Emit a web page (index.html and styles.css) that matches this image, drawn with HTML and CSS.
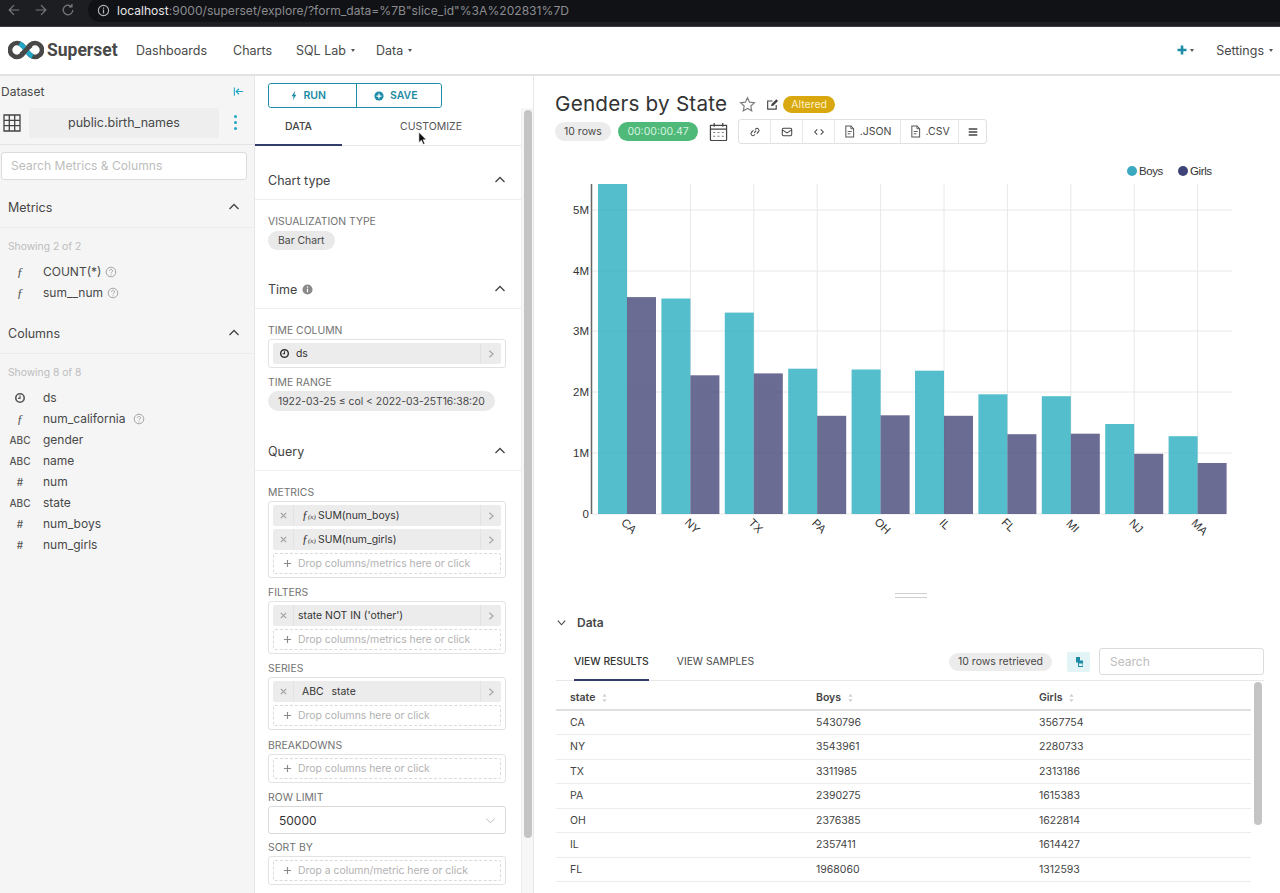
FILE: index.html
```html
<!DOCTYPE html>
<html lang="en">
<head>
<meta charset="utf-8">
<title>Genders by State</title>
<link rel="stylesheet" href="styles.css">
</head>
<body>
<svg class="sprite" aria-hidden="true">
  <symbol id="up" viewBox="0 0 12 12"><path d="M1.5 8 6 3.5 10.500 8" fill="none" stroke="currentColor" stroke-width="1.300"/></symbol>
  <symbol id="right" viewBox="0 0 12 12"><path d="M4 2l4.500 4L4 10" fill="none" stroke="currentColor" stroke-width="1.500"/></symbol>
  <symbol id="help" viewBox="0 0 12 12"><circle cx="6" cy="6" r="4.800" fill="none" stroke="currentColor"/><path d="M4.500 4.800a1.500 1.500 0 1 1 2.300 1.300c-.6.4-.8.6-.8 1.200" fill="none" stroke="currentColor"/><circle cx="6" cy="8.800" r=".6" fill="currentColor"/></symbol>
  <symbol id="clock" viewBox="0 0 12 12"><circle cx="6" cy="6" r="4.200" fill="none" stroke="currentColor" stroke-width="1.600"/><path d="M6 3.500V6.300H4" fill="none" stroke="currentColor" stroke-width="1.200"/></symbol>
  <symbol id="cross" viewBox="0 0 10 10"><path d="M2 2l6 6M8 2l-6 6" fill="none" stroke="currentColor" stroke-width="1.300"/></symbol>
  <symbol id="plus" viewBox="0 0 10 10"><path d="M5 1v8M1 5h8" fill="none" stroke="currentColor" stroke-width="1.300"/></symbol>
  <symbol id="file" viewBox="0 0 12 14"><path d="M2 1h5.500L10.500 4v9H2z" fill="none" stroke="currentColor" stroke-width="1.100"/><path d="M7.500 1v3h3M4 7h4.500M4 9.500h3" fill="none" stroke="currentColor"/></symbol>
  <symbol id="sort" viewBox="0 0 8 12"><path d="M4 1 6.500 4.500h-5zM4 11 1.500 7.500h5z" fill="currentColor"/></symbol>
</svg>

<header class="browser">
  <svg class="b-icon" viewBox="0 0 16 16"><path d="M14 8H2.500M8 2.500 2.500 8 8 13.500" fill="none" stroke="currentColor" stroke-width="1.400"/></svg>
  <svg class="b-icon" viewBox="0 0 16 16"><path d="M2 8h11.500M8 2.500 13.500 8 8 13.500" fill="none" stroke="currentColor" stroke-width="1.400"/></svg>
  <svg class="b-icon" viewBox="0 0 16 16"><path d="M13.500 8a5.500 5.500 0 1 1-1.700-4M12.500 1v3.500H9" fill="none" stroke="currentColor" stroke-width="1.400"/></svg>
  <div class="urlbar">
    <svg class="b-info" viewBox="0 0 14 14"><circle cx="7" cy="7" r="5.500" fill="none" stroke="currentColor" stroke-width="1.200"/><path d="M7 6v4.200M7 3.800v1.300" stroke="currentColor" stroke-width="1.300"/></svg>
    <span class="url"><span class="url-host">localhost</span>:9000/superset/explore/?form_data=%7B"slice_id"%3A%202831%7D</span>
  </div>
</header>

<nav class="nav">
  <svg class="logo" viewBox="0 0 36 20">
    <path d="M18 10C15 6 13 3 9 3A7 7 0 0 0 9 17C13 17 15 14 18 10C21 6 23 3 27 3A7 7 0 0 1 27 17C23 17 21 14 18 10" fill="none" stroke="#484848" stroke-width="4.600"/>
    <path d="M11.500 3.500C14.500 5 16 7.400 18 10C20 12.600 21.500 15 24.500 16.500" fill="none" stroke="#20a7c9" stroke-width="4.600"/>
    <path d="M13 14.500C15 13 16.500 12 18 10C19.500 8 21 7 23 5.500" fill="none" stroke="#484848" stroke-width="4.600"/>
  </svg>
  <span class="brand">Superset</span>
  <a class="nav-link nav-dash">Dashboards</a>
  <a class="nav-link nav-charts">Charts</a>
  <a class="nav-link nav-sql">SQL Lab<i class="caret"></i></a>
  <a class="nav-link">Data<i class="caret"></i></a>
  <span class="nav-fill"></span>
  <svg class="nav-plus" viewBox="0 0 10 10"><path d="M5 .5v9M.5 5h9" stroke="#1d8ba5" stroke-width="2.600"/></svg>
  <i class="caret caret-plus"></i>
  <a class="nav-link nav-settings">Settings<i class="caret"></i></a>
</nav>

<main class="main">
  <aside class="left">
    <div class="ds-head">
      <span>Dataset</span>
      <svg class="collapse" viewBox="0 0 12 12"><path d="M1.500 1.500v9M11 6H4M6.500 3 3.500 6l3 3" fill="none" stroke="#20a7c9" stroke-width="1.200"/></svg>
    </div>
    <div class="ds-row">
      <svg class="ds-grid" viewBox="0 0 18 18"><path d="M1 1h16v16H1zM1 6.300h16M1 11.700h16M6.300 1v16M11.700 1v16" fill="none" stroke="#444" stroke-width="1.300"/></svg>
      <div class="ds-name">public.birth_names</div>
      <div class="kebab"><i></i><i></i><i></i></div>
    </div>
    <div class="search">Search Metrics &amp; Columns</div>

    <div class="l-head l-head-first"><span>Metrics</span><svg class="chev"><use href="#up"/></svg></div>
    <div class="showing">Showing 2 of 2</div>
    <ul class="fields">
      <li><span class="ft ft-f">ƒ</span><span>COUNT(*)</span><svg class="help"><use href="#help"/></svg></li>
      <li><span class="ft ft-f">ƒ</span><span>sum__num</span><svg class="help"><use href="#help"/></svg></li>
    </ul>

    <div class="l-head l-head-next"><span>Columns</span><svg class="chev"><use href="#up"/></svg></div>
    <div class="showing">Showing 8 of 8</div>
    <ul class="fields">
      <li><span class="ft"><svg class="clock"><use href="#clock"/></svg></span><span>ds</span></li>
      <li><span class="ft ft-f">ƒ</span><span>num_california</span><svg class="help help-wide"><use href="#help"/></svg></li>
      <li><span class="ft">ABC</span><span>gender</span></li>
      <li><span class="ft">ABC</span><span>name</span></li>
      <li><span class="ft">#</span><span>num</span></li>
      <li><span class="ft">ABC</span><span>state</span></li>
      <li><span class="ft">#</span><span>num_boys</span></li>
      <li><span class="ft">#</span><span>num_girls</span></li>
    </ul>
  </aside>

  <section class="middle">
    <div class="actions">
      <button class="act act-run"><svg class="act-i" viewBox="0 0 10 14"><path d="M6.500 1 2 8h2.500L3.500 13 8 6H5.500z" fill="#1d8ba5"/></svg>RUN</button>
      <button class="act act-save"><svg class="act-i act-plus" viewBox="0 0 12 12"><circle cx="6" cy="6" r="5.500" fill="#1d8ba5"/><path d="M6 3v6M3 6h6" stroke="#fff" stroke-width="1.500"/></svg>SAVE</button>
    </div>
    <div class="m-body">
      <div class="m-content">
        <div class="tabs">
          <span class="tab tab-on">DATA</span>
          <span class="tab">CUSTOMIZE</span>
        </div>

        <div class="c-head c-first"><span>Chart type</span><svg class="chev"><use href="#up"/></svg></div>
        <div class="c-body">
          <div class="field field-vis"><label>VISUALIZATION TYPE</label><span class="pill">Bar Chart</span></div>
        </div>

        <div class="c-head c-next"><span>Time <svg class="info" viewBox="0 0 12 12"><circle cx="6" cy="6" r="5.500" fill="#8a8a8a"/><path d="M6 5.200v3.800M6 2.800v1.300" stroke="#fff" stroke-width="1.300"/></svg></span><svg class="chev"><use href="#up"/></svg></div>
        <div class="c-body">
          <div class="field field-first"><label>TIME COLUMN</label>
            <div class="box">
              <div class="opt"><span class="opt-main opt-plain"><svg class="clock clock-dark"><use href="#clock"/></svg><span>ds</span></span><span class="opt-go"><svg><use href="#right"/></svg></span></div>
            </div>
          </div>
          <div class="field"><label>TIME RANGE</label><span class="pill pill-range">1922-03-25 ≤ col &lt; 2022-03-25T16:38:20</span></div>
        </div>

        <div class="c-head c-query"><span>Query</span><svg class="chev"><use href="#up"/></svg></div>
        <div class="c-body">
          <div class="field field-first"><label>METRICS</label>
            <div class="box">
              <div class="opt"><span class="opt-x"><svg><use href="#cross"/></svg></span><span class="opt-main"><em class="fx">ƒ<small>(x)</small></em>SUM(num_boys)</span><span class="opt-go"><svg><use href="#right"/></svg></span></div>
              <div class="opt"><span class="opt-x"><svg><use href="#cross"/></svg></span><span class="opt-main"><em class="fx">ƒ<small>(x)</small></em>SUM(num_girls)</span><span class="opt-go"><svg><use href="#right"/></svg></span></div>
              <div class="drop"><svg><use href="#plus"/></svg>Drop columns/metrics here or click</div>
            </div>
          </div>
          <div class="field"><label>FILTERS</label>
            <div class="box">
              <div class="opt"><span class="opt-x"><svg><use href="#cross"/></svg></span><span class="opt-main opt-tight">state NOT IN ('other')</span><span class="opt-go"><svg><use href="#right"/></svg></span></div>
              <div class="drop"><svg><use href="#plus"/></svg>Drop columns/metrics here or click</div>
            </div>
          </div>
          <div class="field"><label>SERIES</label>
            <div class="box">
              <div class="opt"><span class="opt-x"><svg><use href="#cross"/></svg></span><span class="opt-main"><span class="opt-abc">ABC</span>state</span><span class="opt-go"><svg><use href="#right"/></svg></span></div>
              <div class="drop"><svg><use href="#plus"/></svg>Drop columns here or click</div>
            </div>
          </div>
          <div class="field field-wide"><label>BREAKDOWNS</label>
            <div class="box"><div class="drop"><svg><use href="#plus"/></svg>Drop columns here or click</div></div>
          </div>
          <div class="field"><label>ROW LIMIT</label>
            <div class="select"><span>50000</span><svg viewBox="0 0 12 12"><path d="M1.500 4 6 8.500 10.500 4" fill="none" stroke="#b5b5b5"/></svg></div>
          </div>
          <div class="field field-close"><label>SORT BY</label>
            <div class="box"><div class="drop"><svg><use href="#plus"/></svg>Drop a column/metric here or click</div></div>
          </div>
        </div>
      </div>
      <div class="m-track"><div class="m-thumb"></div></div>
    </div>
  </section>

  <section class="right">
    <div class="title-row">
      <h1>Genders by State</h1>
      <svg class="star" viewBox="0 0 18 18"><path d="M9 1.800l2.200 4.700 5.100.6-3.800 3.500 1 5.100L9 13.200l-4.500 2.500 1-5.100L1.700 7.100l5.100-.6z" fill="none" stroke="#7f7f7f" stroke-width="1.300"/></svg>
      <svg class="edit" viewBox="0 0 14 14"><path d="M11 7.500V12H1.800V3.200H7" fill="none" stroke="#444" stroke-width="1.200"/><path d="M5.500 8.800l.5-2.300L11.200 1.300l1.800 1.800-5.200 5.200z" fill="#444"/></svg>
      <span class="altered">Altered</span>
    </div>
    <div class="meta-row">
      <span class="badge">10 rows</span>
      <span class="badge badge-time">00:00:00.47</span>
      <svg class="cal" viewBox="0 0 20 20"><path d="M1.500 3.500h17v15a1 1 0 0 1-1 1h-15a1 1 0 0 1-1-1zM1.500 7.500h17M5.500 1v4M14.500 1v4" fill="none" stroke="#444" stroke-width="1.300"/><path d="M4.500 11h2M9 11h2M13.500 11h2M4.500 15h2M9 15h2M13.500 15h2" stroke="#777" stroke-width="1.200"/></svg>
      <div class="btn-group">
        <span class="gb gb-s"><svg viewBox="0 0 14 14"><path d="M6 8l2.500-2.500M5.200 5 3 7.200a2.300 2.300 0 0 0 3.300 3.300L7 9.800M9 9l2-2.200A2.300 2.300 0 0 0 7.700 3.500L7 4.200" fill="none" stroke="#444" stroke-width="1.200"/></svg></span>
        <span class="gb gb-s"><svg viewBox="0 0 14 14"><rect x="1.500" y="2.500" width="11" height="9" rx="1.500" fill="none" stroke="#444" stroke-width="1.200"/><path d="M1.500 4.500 7 8l5.500-3.500" fill="none" stroke="#444" stroke-width="1.200"/></svg></span>
        <span class="gb gb-s"><svg viewBox="0 0 14 14"><path d="M5 4 2 7l3 3M9 4l3 3-3 3" fill="none" stroke="#444" stroke-width="1.200"/></svg></span>
        <span class="gb gb-json"><svg class="gb-file"><use href="#file"/></svg>.JSON</span>
        <span class="gb gb-csv"><svg class="gb-file"><use href="#file"/></svg>.CSV</span>
        <span class="gb gb-menu"><svg viewBox="0 0 14 14"><path d="M2 3.500h10M2 7h10M2 10.500h10" stroke="#444" stroke-width="1.500"/></svg></span>
      </div>
    </div>

    <svg class="chart" viewBox="534 150 746 440">
      <g class="grid">
        <path d="M591 210H1232M591 271H1232M591 331H1232M591 392H1232M591 453H1232M591 514H1226"/>
        <path d="M627 184V514M690.400 184V514M753.800 184V514M817.200 184V514M880.600 184V514M944 184V514M1007.400 184V514M1070.800 184V514M1134.200 184V514M1197.600 184V514"/>
      </g>
      <g class="boys">
        <rect x="598" y="184" width="29" height="330"/><rect x="661.400" y="298.500" width="29" height="215.500"/><rect x="724.800" y="312.600" width="29" height="201.400"/><rect x="788.200" y="368.700" width="29" height="145.300"/><rect x="851.600" y="369.500" width="29" height="144.500"/><rect x="915" y="370.700" width="29" height="143.300"/><rect x="978.400" y="394.300" width="29" height="119.700"/><rect x="1041.800" y="396.200" width="29" height="117.800"/><rect x="1105.200" y="424" width="29" height="90"/><rect x="1168.600" y="436.200" width="29" height="77.800"/>
      </g>
      <g class="girls">
        <rect x="627" y="297.100" width="29" height="216.900"/><rect x="690.400" y="375.300" width="29" height="138.700"/><rect x="753.800" y="373.400" width="29" height="140.600"/><rect x="817.200" y="415.800" width="29" height="98.200"/><rect x="880.600" y="415.300" width="29" height="98.700"/><rect x="944" y="415.800" width="29" height="98.200"/><rect x="1007.400" y="434.200" width="29" height="79.800"/><rect x="1070.800" y="433.700" width="29" height="80.300"/><rect x="1134.200" y="453.800" width="29" height="60.200"/><rect x="1197.600" y="463" width="29" height="51"/>
      </g>
      <path class="axis" d="M591.500 184V514"/>
      <g class="ticks">
        <text x="589" y="214">5M</text><text x="589" y="275">4M</text><text x="589" y="335">3M</text><text x="589" y="396">2M</text><text x="589" y="457">1M</text><text x="589" y="518">0</text>
      </g>
      <g class="xlabels">
        <text x="629" y="530" transform="rotate(45 629 526)">CA</text>
        <text x="692.400" y="530" transform="rotate(45 692.400 526)">NY</text>
        <text x="755.800" y="530" transform="rotate(45 755.800 526)">TX</text>
        <text x="819.200" y="530" transform="rotate(45 819.200 526)">PA</text>
        <text x="882.600" y="530" transform="rotate(45 882.600 526)">OH</text>
        <text x="945" y="528" transform="rotate(45 945 524)">IL</text>
        <text x="1008.400" y="529" transform="rotate(45 1008.400 525)">FL</text>
        <text x="1072.800" y="530" transform="rotate(45 1072.800 526)">MI</text>
        <text x="1136.200" y="530" transform="rotate(45 1136.200 526)">NJ</text>
        <text x="1199.600" y="531" transform="rotate(45 1199.600 527)">MA</text>
      </g>
      <circle class="dot-boys" cx="1132" cy="171" r="5"/><text class="legend" x="1139" y="175">Boys</text>
      <circle class="dot-girls" cx="1183" cy="171" r="5"/><text class="legend" x="1190" y="175">Girls</text>
    </svg>

    <div class="handle"><i></i><i></i></div>
    <div class="data-head"><svg viewBox="0 0 12 12"><path d="M2 4l4 4.500L10 4" fill="none" stroke="#444" stroke-width="1.200"/></svg>Data</div>
    <div class="data-tabs">
      <span class="dtab dtab-on">VIEW RESULTS</span>
      <span class="dtab">VIEW SAMPLES</span>
      <span class="nav-fill"></span>
      <span class="badge badge-rows">10 rows retrieved</span>
      <span class="copy"><svg viewBox="0 0 12 12"><path d="M3 1h4v3.500h3V11H5V6.500H3z" fill="#1d8ba5"/><path d="M6 7.500h3.500V10H6z" fill="#e3f4f7"/></svg></span>
      <span class="dsearch">Search</span>
    </div>
    <div class="table-wrap">
      <table class="tbl">
        <thead><tr><th class="col-a">state<svg><use href="#sort"/></svg></th><th class="col-b">Boys<svg><use href="#sort"/></svg></th><th>Girls<svg><use href="#sort"/></svg></th></tr></thead>
        <tbody>
          <tr><td>CA</td><td>5430796</td><td>3567754</td></tr>
          <tr><td>NY</td><td>3543961</td><td>2280733</td></tr>
          <tr><td>TX</td><td>3311985</td><td>2313186</td></tr>
          <tr><td>PA</td><td>2390275</td><td>1615383</td></tr>
          <tr><td>OH</td><td>2376385</td><td>1622814</td></tr>
          <tr><td>IL</td><td>2357411</td><td>1614427</td></tr>
          <tr><td>FL</td><td>1968060</td><td>1312593</td></tr>
        </tbody>
      </table>
      <div class="t-thumb"></div>
    </div>
  </section>
</main>

<svg class="cursor" viewBox="0 0 10 16"><path d="M1 1v11.500l2.800-2.500 2 4.500 1.800-.8-2-4.300h3.600z" fill="#111" stroke="#fff" stroke-width=".6"/></svg>
</body>
</html>
```

FILE: styles.css
```css
* { box-sizing: border-box; }
html, body { margin: 0; height: 893px; overflow: hidden; }
body { position: relative; background: #fff; color: #444; font-family: Inter, "Liberation Sans", sans-serif; font-size: 12px; }
.sprite { position: absolute; width: 0; height: 0; }
svg { display: block; flex: none; }
ul { list-style: none; margin: 0; padding: 0; }
label { display: block; }
h1 { margin: 0; font-weight: 400; }

/* browser chrome */
.browser { height: 27px; background: #1d1e22; border-bottom: 1px solid #3c3c3c; display: flex; align-items: center; padding: 0 0 6px 7px; gap: 13px; color: #77787b; overflow: hidden; }
.b-icon { width: 14px; height: 14px; }
.urlbar { flex: 1; height: 24px; background: #111216; border-radius: 12px 0 0 12px; display: flex; align-items: center; padding-left: 9px; gap: 7px; }
.b-info { width: 13px; height: 13px; color: #b4b4b6; }
.url { color: #8b8c90; font-size: 12.100px; white-space: nowrap; }
.url-host { color: #e6e6e6; }

/* app nav */
.nav { height: 49px; display: flex; align-items: center; padding: 0 0 1px 8px; border-bottom: 2px solid #e2e2e2; font-size: 12.500px; }
.logo { width: 36px; height: 20px; }
.brand { margin-left: 3px; width: 89px; font: 700 17.500px Roboto, Inter, sans-serif; color: #484848; }
.nav-link { color: #484848; white-space: nowrap; display: flex; align-items: center; }
.nav-dash { width: 97px; }
.nav-charts { width: 63px; }
.nav-sql { width: 80px; }
.nav-fill { flex: 1; }
.caret { width: 0; height: 0; margin-left: 5px; border: 2.500px solid transparent; border-top: 3px solid #555; border-bottom: 0; }
.nav-plus { width: 10px; height: 10px; }
.caret-plus { margin-left: 3px; margin-right: 22px; }
.nav-settings { margin-right: 7px; }

.main { height: 817px; display: flex; }

/* left */
.left { width: 255px; background: #f5f5f5; border-right: 1px solid #e6e6e6; color: #484848; }
.ds-head { height: 32px; display: flex; justify-content: space-between; align-items: center; padding: 0 10px 2px 1px; }
.collapse { width: 11px; height: 11px; }
.ds-row { height: 37px; padding-bottom: 7px; border-bottom: 1px solid #e4e4e4; display: flex; align-items: flex-start; }
.ds-grid { width: 18px; height: 18px; margin: 6px 0 0 3px; }
.ds-name { margin-left: 8px; width: 190px; height: 30px; line-height: 30px; text-align: center; background: #eee; border-radius: 3px; font-size: 12.500px; }
.kebab { margin: 7px 0 0 15px; display: flex; flex-direction: column; gap: 3px; }
.kebab i { width: 3px; height: 3px; background: #20a7c9; border-radius: 50%; }
.search { margin: 7px 0 0 1px; width: 246px; height: 28px; line-height: 26px; padding-left: 9px; background: #fff; border: 1px solid #dcdcdc; border-radius: 3px; color: #bdbdbd; font-size: 12.100px; }
.l-head { height: 41px; display: flex; align-items: center; justify-content: space-between; padding: 0 14px 0 8px; border-bottom: 1px solid #ececec; font-size: 12.500px; }
.l-head-first { margin-top: 7px; }
.l-head-next { margin-top: 10px; }
.chev { width: 12px; height: 12px; color: #444; }
.showing { margin-top: 9px; height: 18px; line-height: 18px; padding-left: 8px; color: #bcbcbc; font-size: 10.300px; }
.fields { margin-top: 6px; }
.fields li { height: 21px; display: flex; align-items: center; font-size: 12px; }
.ft { width: 43px; flex: none; padding: 0 11px 0 8px; display: flex; justify-content: center; font-size: 10px; font-weight: 500; color: #555; }
.ft-f { font: italic 13px "Liberation Serif", serif; }
.help { width: 12px; height: 12px; margin-left: 4px; color: #a5a5a5; }
.help-wide { margin-left: 8px; }
.clock { width: 12px; height: 12px; color: #555; }

/* middle */
.middle { width: 279px; display: flex; flex-direction: column; border-right: 1px solid #e6e6e6; }
.actions { margin: 7px 0 0 13px; display: flex; height: 25px; width: 174px; border: 1px solid #1d8ba5; border-radius: 3px; }
.act { flex: 1; background: #fff; border: 0; display: flex; align-items: center; justify-content: center; gap: 5px; font: 600 10.500px Inter, sans-serif; color: #1d8ba5; padding: 0 8px 0 0; border-radius: 3px; }
.act-run { border-right: 1px solid #1d8ba5; border-radius: 3px 0 0 3px; }
.act-save { padding-right: 6px; }
.act-i { width: 8px; height: 11px; }
.act-plus { width: 10px; height: 10px; margin-right: 1px; }
.m-body { flex: 1; min-height: 0; display: flex; overflow: hidden; }
.m-content { width: 266px; flex: none; }
.m-track { flex: 1; background: #f7f7f7; padding: 2px 2px 0 2px; border-left: 1px solid #eee; }
.m-thumb { height: 728px; width: 8px; background: #c4c4c4; border-radius: 4px; }
.tabs { height: 38px; display: flex; border-bottom: 1px solid #e8e8e8; font-size: 10.500px; }
.tab { width: 87px; height: 38px; line-height: 38px; text-align: center; color: #555; }
.tab + .tab { width: 178px; }
.tab-on { border-bottom: 2px solid #323d6b; color: #444; font-weight: 500; }
.c-head { height: 40px; display: flex; align-items: center; justify-content: space-between; padding: 1px 15px 0 13px; border-bottom: 1px solid #eee; font-size: 12.500px; }
.c-head span { display: flex; align-items: center; gap: 5px; }
.c-first { margin-top: 14px; }
.c-next { margin-top: 19px; }
.c-query { margin-top: 20px; }
.info { width: 11px; height: 11px; }
.c-body { padding: 0 15px 0 13px; }
.field { margin-top: 7px; }
.field-first { margin-top: 14px; }
.field-vis { margin-top: 15px; }
.field-wide { margin-top: 8px; }
.field-close { margin-top: 6px; }
.field label { height: 14px; line-height: 16px; margin-bottom: 2px; font-size: 10.400px; color: #727272; white-space: nowrap; }
.field-vis label { line-height: 14px; }
.pill { display: inline-block; height: 19px; line-height: 19px; padding: 0 10px; background: #e9e9e9; border-radius: 10px; font-size: 10.400px; color: #484848; vertical-align: top; }
.pill-range { height: 20px; line-height: 20px; border-radius: 10px; font-size: 10.350px; }
.box { border: 1px solid #e2e2e2; border-radius: 3px; padding: 3px 4px; display: flex; flex-direction: column; gap: 3px; }
.opt { height: 21px; display: flex; background: #ececec; font-size: 10.400px; color: #333; border-radius: 2px; }
.opt-x { width: 21px; flex: none; border-right: 1px solid #e2e2e2; display: flex; align-items: center; justify-content: center; color: #a0a0a0; }
.opt-x svg { width: 9px; height: 9px; }
.opt-main { flex: 1; display: flex; align-items: center; padding-left: 8px; white-space: nowrap; }
.opt-tight { padding-left: 4px; }
.opt-plain { padding-left: 6px; gap: 6px; }
.opt-plain .clock { width: 11px; height: 11px; }
.clock-dark { color: #333; }
.fx { font: italic 12px "Liberation Serif", serif; width: 16px; margin-right: 0; color: #333; white-space: nowrap; }
.fx small { font-size: 7px; }
.opt-abc { font-size: 10.400px; margin-right: 8px; }
.opt-go { width: 21px; flex: none; border-left: 1px solid #e2e2e2; display: flex; align-items: center; justify-content: center; color: #a8a8a8; }
.opt-go svg { width: 10px; height: 10px; }
.drop { height: 21px; border: 1px dashed #dadada; border-radius: 2px; display: flex; align-items: center; padding-left: 9px; gap: 6px; color: #b2b2b2; font-size: 10.400px; white-space: nowrap; }
.drop svg { width: 9px; height: 9px; color: #8a8a8a; }
.select { height: 28px; border: 1px solid #d9d9d9; border-radius: 3px; display: flex; align-items: center; justify-content: space-between; padding: 0 9px 0 10px; font-size: 12px; color: #333; }
.select svg { width: 11px; height: 11px; }

/* right */
.right { flex: 1; min-width: 0; padding: 0; }
.title-row { margin: 16px 0 0 21px; height: 24px; display: flex; align-items: center; }
h1 { font-size: 20.700px; line-height: 24px; letter-spacing: .2px; color: #333; white-space: nowrap; }
.star { width: 17px; height: 17px; margin-left: 12px; }
.edit { width: 13px; height: 13px; margin-left: 10px; }
.altered { margin-left: 4px; height: 17px; line-height: 17px; padding: 0 8px; background: #d9a80e; color: #fff2c8; border-radius: 9px; font-size: 10.500px; }
.meta-row { margin: 3px 0 0 21px; height: 25px; display: flex; align-items: center; }
.badge { height: 19px; line-height: 19px; padding: 0 9px; background: #ececec; border-radius: 10px; font-size: 10.500px; color: #484848; white-space: nowrap; }
.badge-time { margin-left: 7px; padding: 0 9.500px; background: #4fb97a; color: #d5f2df; }
.cal { width: 19px; height: 19px; margin-left: 11px; }
.btn-group { margin-left: 10px; height: 25px; display: flex; border: 1px solid #e0e0e0; border-radius: 3px; font-size: 10.500px; color: #484848; }
.gb { display: flex; align-items: center; justify-content: center; gap: 5px; border-right: 1px solid #e6e6e6; }
.gb svg { width: 12px; height: 12px; }
.gb svg.gb-file { width: 11px; height: 13px; color: #555; }
.gb-s { width: 32px; }
.gb-json { width: 66px; }
.gb-csv { width: 58px; }
.gb-menu { width: 27px; border: 0; }
.chart { width: 746px; height: 440px; margin-top: 6px; }
.grid path { fill: none; stroke: #e8e8e8; stroke-width: 1; }
.boys rect { fill: #2aaec1; fill-opacity: .8; }
.girls rect { fill: #454778; fill-opacity: .8; }
.axis { stroke: #666; stroke-width: 1.500; fill: none; }
.ticks text { font: 11.500px "Liberation Sans", sans-serif; fill: #333; text-anchor: end; }
.xlabels text { font: 11.500px "Liberation Sans", sans-serif; fill: #333; text-anchor: middle; }
.legend { font: 11.500px "Liberation Sans", sans-serif; fill: #333; letter-spacing: -.4px; }
.dot-boys { fill: #3ba9c2; }
.dot-girls { fill: #3f4377; }
.handle { height: 10px; display: flex; flex-direction: column; gap: 3px; align-items: center; padding: 3px 0 0 7px; margin-top: 0; }
.handle i { width: 32px; height: 1px; background: #cfcfcf; }
.data-head { margin: 10px 0 0 22px; height: 24px; display: flex; align-items: center; gap: 10px; font-size: 12px; font-weight: 600; color: #484848; }
.data-head svg { width: 11px; height: 11px; }
.data-tabs { margin: 9px 16px 0 22px; height: 38px; display: flex; align-items: center; border-bottom: 1px solid #e8e8e8; }
.dtab { height: 38px; line-height: 37px; padding: 0 18px 0 0; margin-right: 10px; font-size: 10.300px; color: #484848; white-space: nowrap; }
.dtab-on { margin-left: 18px; padding-right: 0; margin-right: 28px; border-bottom: 2px solid #323d6b; color: #333; font-weight: 500; }
.badge-rows { height: 18px; line-height: 18px; padding: 0 9px; }
.copy { margin-left: 15px; width: 23px; height: 20px; background: #e3f4f7; border-radius: 2px; display: flex; align-items: center; justify-content: center; }
.copy svg { width: 12px; height: 12px; }
.dsearch { margin-left: 9px; width: 165px; height: 27px; line-height: 25px; padding-left: 10px; border: 1px solid #dcdcdc; border-radius: 3px; color: #bdbdbd; font-size: 12px; }
.table-wrap { margin: 1px 0 0 22px; height: 212px; display: flex; position: relative; overflow: hidden; }
.tbl { width: 695px; flex: none; border-collapse: collapse; table-layout: fixed; align-self: flex-start; font-size: 10.500px; color: #444; }
.tbl th { height: 28px; text-align: left; padding: 3px 0 0 14px; border-bottom: 2px solid #e0e0e0; font-weight: 600; }
.tbl th svg { display: inline-block; vertical-align: -2px; width: 7px; height: 10px; margin-left: 6px; color: #d0d0d0; }
.col-a { width: 246px; }
.col-b { width: 223px; }
.tbl td { height: 24.500px; padding: 0 0 0 14px; border-bottom: 1px solid #ececec; }
.t-thumb { margin: 0 0 0 3px; width: 8px; height: 143px; background: #c4c4c4; border-radius: 4px; }
.cursor { position: absolute; left: 418px; top: 131px; width: 9px; height: 15px; }
```
